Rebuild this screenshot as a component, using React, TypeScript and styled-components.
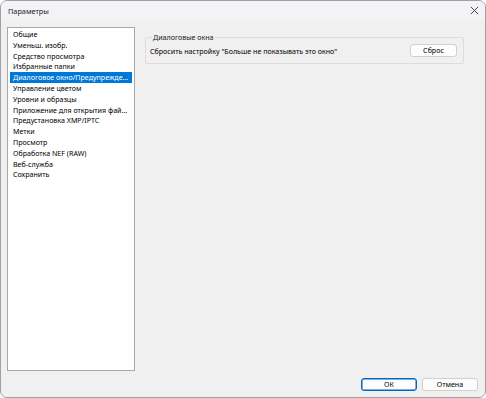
import React from "react";
import styled, { createGlobalStyle } from "styled-components";

const GlobalStyle = createGlobalStyle`
  html, body {
    margin: 0;
    padding: 0;
    background: #ffffff;
  }
  body {
    font-family: "Noto Sans", "Open Sans", sans-serif;
    font-size: 7.1px;
    color: #000;
  }
`;

const Window = styled.div`
  width: 486px;
  height: 398px;
  box-sizing: border-box;
  border: 1px solid #a0a0a0;
  border-radius: 7px;
  overflow: hidden;
  background: #f0f0f0;
  display: flex;
  flex-direction: column;
`;

const TitleBar = styled.div`
  height: 19px;
  flex-shrink: 0;
  background: #f3f3f7;
  display: flex;
  align-items: center;
  justify-content: space-between;
  padding: 0 6px 0 7px;
  font-size: 7.3px;
  color: #1a1a1a;
`;

const CloseIcon = styled.svg`
  width: 9px;
  height: 9px;
`;

const Body = styled.div`
  flex: 1;
  display: flex;
  flex-direction: column;
  padding: 7px 7px 6px 6px;
`;

const Main = styled.div`
  flex: 1;
  display: flex;
  gap: 10px;
`;

const CategoryList = styled.ul`
  list-style: none;
  margin: 0;
  padding: 1px 2px;
  width: 128px;
  height: 344px;
  box-sizing: border-box;
  background: #fff;
  border: 1px solid #a8a8a8;
`;

const CategoryItem = styled.li<{ $selected?: boolean }>`
  height: 10.8px;
  line-height: 10.8px;
  padding-left: 3px;
  white-space: nowrap;
  overflow: hidden;
  background: ${(p) => (p.$selected ? "#0078d7" : "transparent")};
  color: ${(p) => (p.$selected ? "#fff" : "#000")};
`;

const Panel = styled.div`
  flex: 1;
  padding-top: 5px;
  padding-right: 14px;
`;

const GroupBox = styled.fieldset`
  margin: 0;
  padding: 2px 6px 6px 4px;
  border: 1px solid #dcdcdc;
  border-radius: 2px;
  display: flex;
  align-items: center;
  justify-content: space-between;
`;

const Legend = styled.legend`
  padding: 0 1px;
  margin-left: 2px;
  color: #1a1a1a;
`;

const Button = styled.button<{ $default?: boolean }>`
  font-family: inherit;
  font-size: 7.1px;
  color: #000;
  background: #fdfdfd;
  border: 1px solid ${(p) => (p.$default ? "#0067c0" : "#d0d0d0")};
  box-shadow: ${(p) => (p.$default ? "inset 0 0 0 0.5px #0067c0" : "none")};
  border-radius: 3px;
  padding: 0;
  height: 13px;
  line-height: 11px;
`;

const ResetButton = styled(Button)`
  width: 47px;
`;

const Footer = styled.div`
  display: flex;
  justify-content: flex-end;
  gap: 5px;
  padding: 7px 0 0 0;
`;

const FooterButton = styled(Button)`
  width: 56px;
`;

const categories = [
  "Общие",
  "Уменьш. изобр.",
  "Средство просмотра",
  "Избранные папки",
  "Диалоговое окно/Предупрежде...",
  "Управление цветом",
  "Уровни и образцы",
  "Приложение для открытия фай...",
  "Предустановка XMP/IPTC",
  "Метки",
  "Просмотр",
  "Обработка NEF (RAW)",
  "Веб-служба",
  "Сохранить",
];

export default function App() {
  return (
    <>
      <GlobalStyle />
      <Window>
        <TitleBar>
          <span>Параметры</span>
          <CloseIcon viewBox="0 0 10 10">
            <path d="M1 1 L9 9 M9 1 L1 9" stroke="#333" strokeWidth="1" />
          </CloseIcon>
        </TitleBar>
        <Body>
          <Main>
            <CategoryList>
              {categories.map((c, i) => (
                <CategoryItem key={c} $selected={i === 4}>
                  {c}
                </CategoryItem>
              ))}
            </CategoryList>
            <Panel>
              <GroupBox>
                <Legend>Диалоговые окна</Legend>
                <span>Сбросить настройку "Больше не показывать это окно"</span>
                <ResetButton>Сброс</ResetButton>
              </GroupBox>
            </Panel>
          </Main>
          <Footer>
            <FooterButton $default>ОК</FooterButton>
            <FooterButton>Отмена</FooterButton>
          </Footer>
        </Body>
      </Window>
    </>
  );
}
